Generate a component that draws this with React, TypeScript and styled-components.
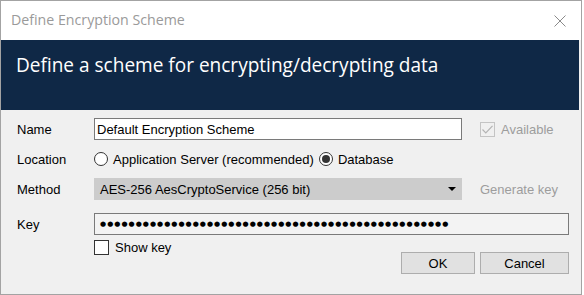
import React from "react";
import styled, { createGlobalStyle } from "styled-components";

const GlobalStyle = createGlobalStyle`
  html, body {
    margin: 0;
    padding: 0;
    background: #ffffff;
  }
`;

const Window = styled.div`
  width: 582px;
  height: 295px;
  box-sizing: border-box;
  border: 1px solid #a3a3a3;
  background: #f0f0f0;
  display: flex;
  flex-direction: column;
  font-family: "Liberation Sans", Arial, sans-serif;
  font-size: 13px;
  color: #000000;
`;

const TitleBar = styled.div`
  height: 39px;
  flex: none;
  background: #ffffff;
  display: flex;
  align-items: center;
  justify-content: space-between;
  padding: 0 15px 0 10px;
`;

const TitleText = styled.span`
  font-family: "Open Sans", "Noto Sans", sans-serif;
  font-size: 14.2px;
  color: #9a9a9a;
  padding-bottom: 2px;
`;

const Banner = styled.div`
  height: 70px;
  flex: none;
  background: #0f2846;
  margin-right: 2px;
  display: flex;
  align-items: flex-start;
  padding: 12px 0 0 15px;
  box-sizing: border-box;
`;

const Heading = styled.h1`
  margin: 0;
  font-family: "Open Sans", "Noto Sans", sans-serif;
  font-weight: 400;
  font-size: 19.05px;
  color: #ffffff;
`;

const Form = styled.div`
  display: grid;
  grid-template-columns: 77px 368px 1fr;
  grid-template-rows: 22px 22px 22px 27px auto;
  row-gap: 8px;
  padding: 8px 12px 0 16px;
`;

const Label = styled.div`
  display: flex;
  align-items: center;
  height: 22px;
  align-self: end;
`;

const TextBox = styled.div<{ $readOnly?: boolean; $span?: number }>`
  grid-column: span ${(p) => p.$span ?? 1};
  align-self: end;
  box-sizing: border-box;
  height: 22px;
  border: 1px solid #7a7a7a;
  background: ${(p) => (p.$readOnly ? "#f3f3f3" : "#ffffff")};
  display: flex;
  align-items: center;
  padding-left: 2px;
  white-space: nowrap;
  overflow: hidden;
`;

const Dots = styled.span`
  font-family: "DejaVu Sans", sans-serif;
  font-size: 7px;
  letter-spacing: 1.02px;
  padding-left: 3px;
`;

const Side = styled.div`
  display: flex;
  align-items: center;
  padding-left: 18px;
  color: #9d9d9d;
`;

const Options = styled.div`
  display: flex;
  align-items: center;
  grid-column: span 2;
`;

const RadioWrap = styled.label`
  display: flex;
  align-items: center;
  gap: 5px;
  margin-right: 5px;
`;

const RadioCircle = styled.span<{ $checked?: boolean }>`
  width: 14px;
  height: 14px;
  box-sizing: border-box;
  border-radius: 50%;
  border: 1px solid #333333;
  background: #ffffff;
  display: flex;
  align-items: center;
  justify-content: center;
  &::after {
    content: "";
    width: 8px;
    height: 8px;
    border-radius: 50%;
    background: ${(p) => (p.$checked ? "#333333" : "transparent")};
  }
`;

const Select = styled.div`
  box-sizing: border-box;
  height: 22px;
  background: #cccccc;
  border: 1px solid #cccccc;
  display: flex;
  align-items: center;
  justify-content: space-between;
  padding: 0 5px 0 5px;
`;

const Arrow = styled.span`
  width: 0;
  height: 0;
  border-left: 4px solid transparent;
  border-right: 4px solid transparent;
  border-top: 4px solid #000000;
`;

const Footer = styled.div`
  grid-column: 2 / span 2;
  display: flex;
  justify-content: space-between;
  margin-top: -3px;
`;

const CheckWrap = styled.label<{ $disabled?: boolean }>`
  display: flex;
  align-items: center;
  gap: 6px;
  height: 15px;
  color: ${(p) => (p.$disabled ? "#9d9d9d" : "#000000")};
`;

const Box = styled.span<{ $disabled?: boolean }>`
  width: 15px;
  height: 15px;
  box-sizing: border-box;
  border: 1px solid ${(p) => (p.$disabled ? "#c4c4c4" : "#333333")};
  background: ${(p) => (p.$disabled ? "#f0f0f0" : "#ffffff")};
  display: flex;
  align-items: center;
  justify-content: center;
`;

const Buttons = styled.div`
  display: flex;
  gap: 5px;
  margin-top: 12px;
`;

const Button = styled.button<{ $width: number }>`
  width: ${(p) => p.$width}px;
  height: 22px;
  box-sizing: border-box;
  border: 1px solid #adadad;
  background: #e1e1e1;
  font-family: "Liberation Sans", Arial, sans-serif;
  font-size: 13px;
  color: #000000;
  padding: 0;
`;

const CloseIcon = () => (
  <svg width="12" height="12" viewBox="0 0 12 12">
    <path d="M0.5 0.5 L11.5 11.5 M11.5 0.5 L0.5 11.5" stroke="#8a8a8a" strokeWidth="1" fill="none" />
  </svg>
);

const CheckMark = () => (
  <svg width="11" height="9" viewBox="0 0 11 9">
    <path d="M0.5 4.5 L3.8 7.8 L10.5 0.8" stroke="#b3b3b3" strokeWidth="1.2" fill="none" />
  </svg>
);

export default function App() {
  return (
    <>
      <GlobalStyle />
      <Window>
        <TitleBar>
          <TitleText>Define Encryption Scheme</TitleText>
          <CloseIcon />
        </TitleBar>
        <Banner>
          <Heading>Define a scheme for encrypting/decrypting data</Heading>
        </Banner>
        <Form>
          <Label>Name</Label>
          <TextBox>Default Encryption Scheme</TextBox>
          <Side>
            <CheckWrap $disabled>
              <Box $disabled>
                <CheckMark />
              </Box>
              Available
            </CheckWrap>
          </Side>

          <Label>Location</Label>
          <Options>
            <RadioWrap>
              <RadioCircle />
              Application Server (recommended)
            </RadioWrap>
            <RadioWrap>
              <RadioCircle $checked />
              Database
            </RadioWrap>
          </Options>

          <Label>Method</Label>
          <Select>
            AES-256 AesCryptoService (256 bit)
            <Arrow />
          </Select>
          <Side>Generate key</Side>

          <Label>Key</Label>
          <TextBox $readOnly $span={2}>
            <Dots>{"●".repeat(49)}</Dots>
          </TextBox>

          <Footer>
            <CheckWrap>
              <Box />
              Show key
            </CheckWrap>
            <Buttons>
              <Button $width={74}>OK</Button>
              <Button $width={89}>Cancel</Button>
            </Buttons>
          </Footer>
        </Form>
      </Window>
    </>
  );
}
